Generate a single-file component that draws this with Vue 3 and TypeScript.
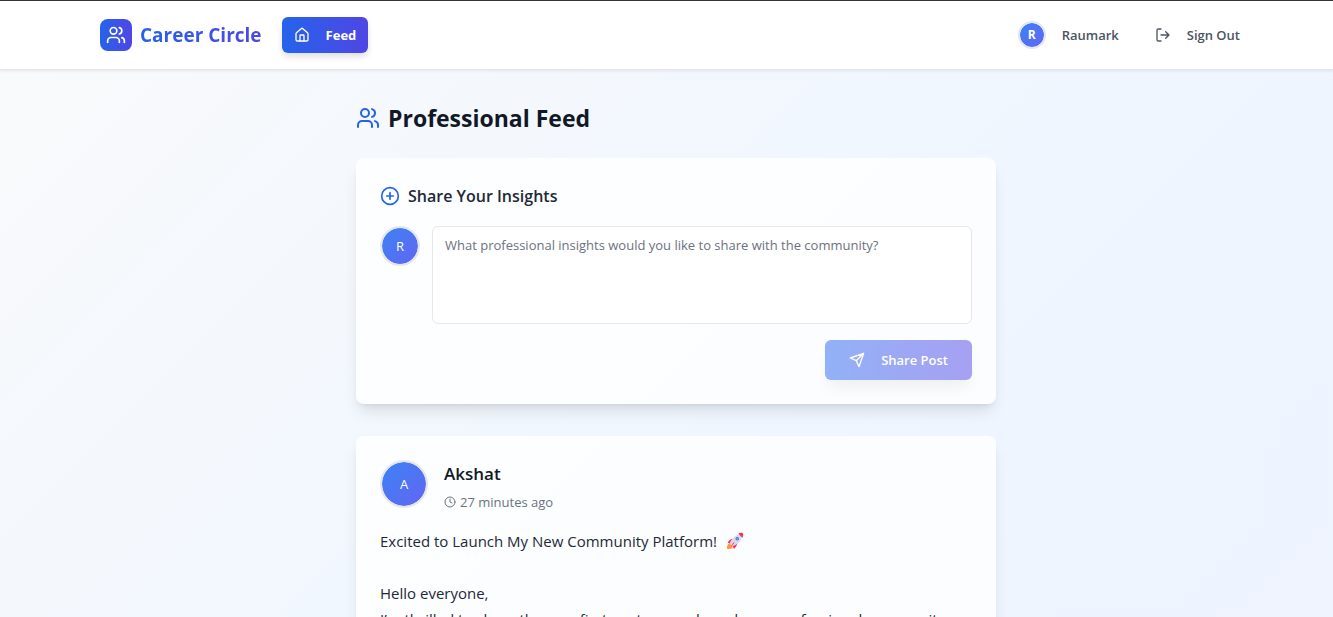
<script setup lang="ts">
import { ref } from 'vue'

interface Post {
  id: number
  author: string
  time: string
  body: string[]
}

const userName = 'Raumark'
const draft = ref('')
const posts: Post[] = [
  {
    id: 1,
    author: 'Akshat',
    time: '27 minutes ago',
    body: [
      'Hello everyone,',
      'I’m thrilled to share the very first post on our brand-new professional community',
    ],
  },
]
</script>

<template>
  <div class="page">
    <header class="topbar">
      <div class="bar">
        <a class="brand" href="#">
          <span class="logo">
            <svg class="ic20" viewBox="0 0 24 24"><path d="M16 21v-2a4 4 0 0 0-4-4H6a4 4 0 0 0-4 4v2" /><circle cx="9" cy="7" r="4" /><path d="M22 21v-2a4 4 0 0 0-3-3.87M16 3.13a4 4 0 0 1 0 7.75" /></svg>
          </span>
          <span class="brand-name">Career Circle</span>
        </a>
        <nav>
          <a class="nav-link" href="#feed">
            <svg class="ic16" viewBox="0 0 24 24"><path d="M15 21v-8a1 1 0 0 0-1-1h-4a1 1 0 0 0-1 1v8" /><path d="M3 10a2 2 0 0 1 .709-1.528l7-5.999a2 2 0 0 1 2.582 0l7 5.999A2 2 0 0 1 21 10v9a2 2 0 0 1-2 2H5a2 2 0 0 1-2-2z" /></svg>
            <span>Feed</span>
          </a>
        </nav>
        <div class="account">
          <a class="account-item" href="#profile">
            <span class="avatar small">{{ userName[0] }}</span>
            <span>{{ userName }}</span>
          </a>
          <button class="account-item" type="button">
            <svg class="ic16" viewBox="0 0 24 24"><path d="M9 21H5a2 2 0 0 1-2-2V5a2 2 0 0 1 2-2h4M16 17l5-5-5-5M21 12H9" /></svg>
            <span>Sign Out</span>
          </button>
        </div>
      </div>
    </header>

    <main>
      <h1>
        <svg class="ic24" viewBox="0 0 24 24"><path d="M16 21v-2a4 4 0 0 0-4-4H6a4 4 0 0 0-4 4v2" /><circle cx="9" cy="7" r="4" /><path d="M22 21v-2a4 4 0 0 0-3-3.87M16 3.13a4 4 0 0 1 0 7.75" /></svg>
        <span>Professional Feed</span>
      </h1>

      <form class="card composer" @submit.prevent>
        <h2>
          <svg class="ic20" viewBox="0 0 24 24"><circle cx="12" cy="12" r="10" /><path d="M8 12h8M12 8v8" /></svg>
          <label for="insight">Share Your Insights</label>
        </h2>
        <div class="entry">
          <span class="avatar medium">{{ userName[0] }}</span>
          <textarea id="insight" v-model="draft" placeholder="What professional insights would you like to share with the community?"></textarea>
        </div>
        <button class="share" type="submit" :disabled="!draft.trim()">
          <svg class="ic16" viewBox="0 0 24 24"><path d="m22 2-7 20-4-9-9-4ZM22 2 11 13" /></svg>
          <span>Share Post</span>
        </button>
      </form>

      <article v-for="post in posts" :key="post.id" class="card post">
        <div class="post-head">
          <span class="avatar large">{{ post.author[0] }}</span>
          <div>
            <h3>{{ post.author }}</h3>
            <p class="time">
              <svg class="ic12" viewBox="0 0 24 24"><circle cx="12" cy="12" r="10" /><path d="M12 6v6l4 2" /></svg>
              <span>{{ post.time }}</span>
            </p>
          </div>
        </div>
        <p class="lead">
          <span>Excited to Launch My New Community Platform!</span>
          <svg class="rocket" viewBox="0 0 32 32" role="img" aria-label="rocket">
            <path fill="#ff9838" d="M2 30c-1-5 1-9 4-10l6 6c-1 3-5 5-10 4Z" />
            <path fill="#f92f60" d="M13 12c-4 0-8 2-10 7l7 2ZM20 19c0 4-2 8-6 11l-3-8Z" />
            <path fill="#dcd8e8" d="M28 4c-9-1-17 6-21 15l6 6C23 21 29 13 28 4Z" />
            <path fill="#f92f60" d="M30 2c-3-1-6-1-8 1l7 7c2-2 2-5 1-8ZM9 24l5-6 1 1-5 6Z" />
            <circle cx="20" cy="12" r="3" fill="#2877d2" />
            <circle cx="20" cy="12" r="2" fill="#5aa2ee" />
          </svg>
        </p>
        <p v-for="line in post.body" :key="line" class="line">{{ line }}</p>
      </article>
    </main>
  </div>
</template>

<style>
body {
  margin: 0;
  overflow: hidden;
}
</style>

<style scoped>
* {
  box-sizing: border-box;
}
.page {
  height: 100vh;
  overflow: hidden;
  font-family: "Segoe UI", "Open Sans", "Noto Sans", sans-serif;
  font-size: 14px;
  line-height: 20px;
  color: #1f2937;
  background: linear-gradient(135deg, #f9fafb 0%, #eff6ff 50%, #eef2ff 100%) 0 0 / 100% 1100px;
}
svg {
  flex: none;
  fill: none;
  stroke: currentColor;
  stroke-width: 2;
  stroke-linecap: round;
  stroke-linejoin: round;
}
.ic12 { width: 12px; height: 12px; }
.ic16 { width: 16px; height: 16px; }
.ic20 { width: 20px; height: 20px; }
.ic24 { width: 24px; height: 24px; }
h1, h2, h3, p {
  margin: 0;
}
a {
  color: inherit;
  text-decoration: none;
}
button {
  font: inherit;
  border: 0;
}
.topbar {
  padding-left: 19px;
  background: rgba(255, 255, 255, 0.95);
  border-top: 1px solid #333436;
  border-bottom: 1px solid #e5e7eb;
  box-shadow: 0 1px 3px rgba(0, 0, 0, 0.08);
}
.bar {
  display: flex;
  align-items: center;
  max-width: 1152px;
  height: 68px;
  margin: 0 auto;
}
.brand {
  display: flex;
  align-items: center;
  gap: 8px;
  margin-right: 20px;
}
.logo {
  display: grid;
  place-items: center;
  width: 32px;
  height: 32px;
  color: #fff;
  border-radius: 8px;
  background: linear-gradient(90deg, #2563eb, #4f46e5);
}
.brand-name {
  font-size: 19px;
  font-weight: 700;
  line-height: 28px;
  color: transparent;
  background: linear-gradient(90deg, #2563eb, #4f46e5);
  background-clip: text;
}
.nav-link {
  display: flex;
  align-items: center;
  gap: 16px;
  height: 36px;
  padding: 0 12px;
  font-size: 13px;
  font-weight: 700;
  color: #fff;
  border-radius: 6px;
  background: linear-gradient(90deg, #2563eb, #4f46e5);
  box-shadow: 0 4px 6px rgba(0, 0, 0, 0.12);
}
.account {
  display: flex;
  gap: 12px;
  margin-left: auto;
}
.account-item {
  display: flex;
  align-items: center;
  gap: 16px;
  height: 36px;
  padding: 0 12px;
  font-size: 13px;
  font-weight: 600;
  color: #4b5563;
  background: none;
}
.avatar {
  display: grid;
  flex: none;
  place-items: center;
  font-size: 13px;
  color: #fff;
  border: 2px solid #e5e7eb;
  border-radius: 50%;
  background: linear-gradient(135deg, #3b82f6, #6366f1) padding-box;
}
.small {
  width: 28px;
  height: 28px;
  font-size: 12px;
  font-weight: 700;
}
.medium {
  width: 40px;
  height: 40px;
}
.large {
  width: 48px;
  height: 48px;
}
main {
  max-width: 659px;
  margin: 0 auto;
  padding: 32px 0 0 19px;
}
h1 {
  display: flex;
  align-items: center;
  gap: 8px;
  margin-bottom: 24px;
  font-size: 23px;
  font-weight: 700;
  line-height: 32px;
  color: #111827;
}
h1 svg, h2 svg {
  color: #2563eb;
}
.card {
  padding: 24px;
  margin-bottom: 32px;
  border-radius: 8px;
  background: rgba(255, 255, 255, 0.8);
  box-shadow: 0 10px 15px -3px rgba(0, 0, 0, 0.1), 0 4px 6px -4px rgba(0, 0, 0, 0.1);
}
h2 {
  display: flex;
  align-items: center;
  gap: 8px;
  margin-bottom: 16px;
  font-size: 16px;
  font-weight: 600;
  line-height: 28px;
}
.entry {
  display: flex;
  gap: 12px;
}
textarea {
  flex: 1;
  height: 98px;
  padding: 8px 12px;
  font: inherit;
  font-size: 13px;
  resize: none;
  color: #1f2937;
  border: 1px solid #e5e7eb;
  border-radius: 6px;
  background: #fff;
}
textarea::placeholder {
  color: #6b7280;
}
.share {
  display: flex;
  align-items: center;
  gap: 16px;
  height: 40px;
  margin: 16px 0 0 auto;
  padding: 0 24px;
  font-size: 13px;
  font-weight: 600;
  color: #fff;
  border-radius: 6px;
  background: linear-gradient(90deg, #2563eb, #4f46e5);
  box-shadow: 0 10px 15px -3px rgba(0, 0, 0, 0.06);
}
.share:disabled {
  background: linear-gradient(90deg, #92b1f7, #a6a0f2);
}
.post-head {
  display: flex;
  gap: 16px;
  margin-bottom: 16px;
}
h3 {
  font-size: 17px;
  font-weight: 600;
  line-height: 28px;
  color: #111827;
}
.time {
  display: flex;
  align-items: center;
  gap: 4px;
  margin-top: 4px;
  font-size: 13px;
  color: #6b7280;
}
.lead, .line {
  font-size: 15px;
  line-height: 26px;
}
.lead {
  display: flex;
  align-items: center;
  gap: 8px;
  margin-bottom: 26px;
}
.rocket {
  width: 20px;
  height: 18px;
  stroke: none;
}
.line {
  white-space: nowrap;
}
</style>
